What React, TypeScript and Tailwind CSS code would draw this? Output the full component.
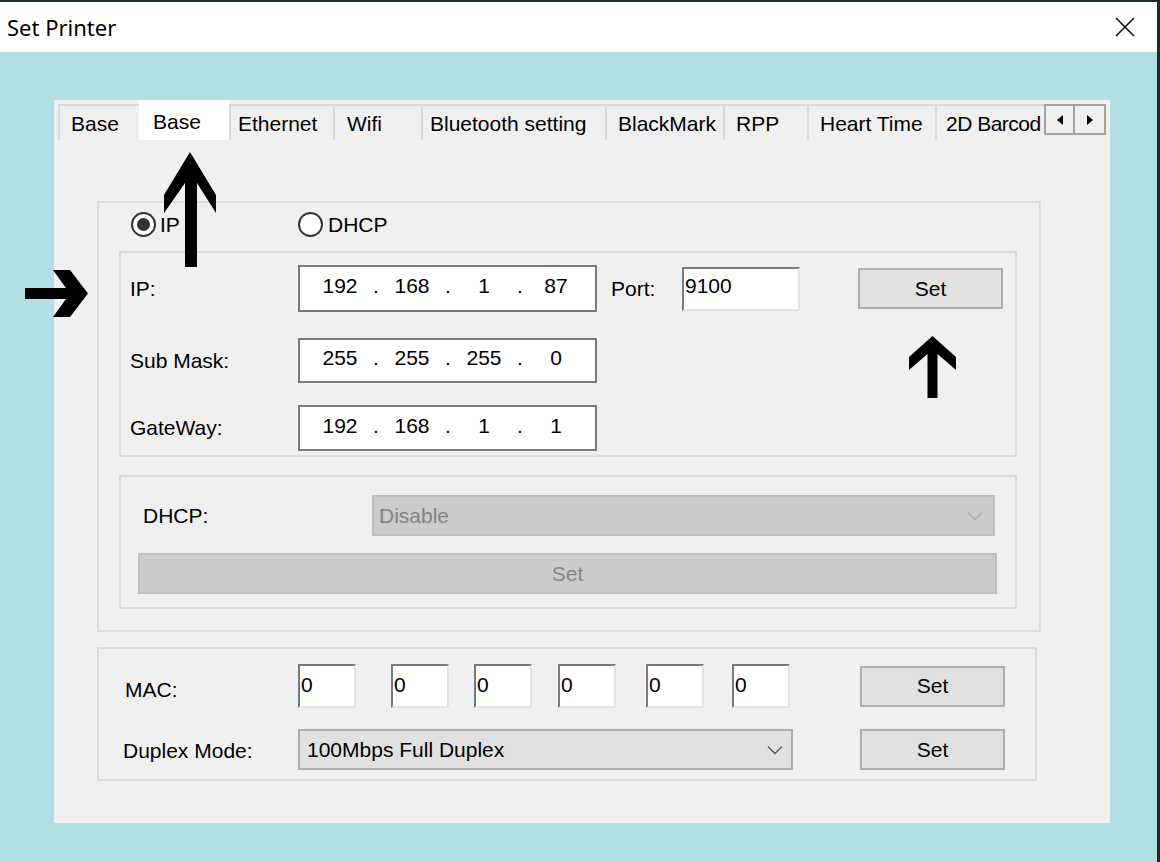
import React from 'react'

// tab captions along the top of the property sheet
const tabs = [
  { label: 'Base', w: 'w-[81px]', pl: 'pl-[11px]' },
  { label: 'Base', w: 'w-[90px]', pl: 'pl-[14px]', active: true },
  { label: 'Ethernet', w: 'w-[104px]', pl: 'pl-[7px]' },
  { label: 'Wifi', w: 'w-[88px]', pl: 'pl-[12px]' },
  { label: 'Bluetooth setting', w: 'w-[184px]', pl: 'pl-[7px]' },
  { label: 'BlackMark', w: 'w-[118px]', pl: 'pl-[11px]' },
  { label: 'RPP', w: 'w-[84px]', pl: 'pl-[11px]' },
  { label: 'Heart Time', w: 'w-[128px]', pl: 'pl-[11px]' },
  { label: '2D Barcod', w: 'w-[109px]', pl: 'pl-[9px] tracking-[-0.5px]' },
]

function IpBox({ parts, h }: { parts: string[]; h: string }) {
  return (
    <div className={`flex w-[299px] ${h} items-center border-2 border-[#7a7a7a] bg-white pb-[5px] pl-[12px]`}>
      {parts.map((p, i) => (
        <React.Fragment key={i}>
          {i > 0 && <span className="w-[16px] text-center">.</span>}
          <span className="w-[56px] text-center">{p}</span>
        </React.Fragment>
      ))}
    </div>
  )
}

// sunken edit box, dark top/left edge and light bottom/right edge
function Edit({ value, className }: { value: string; className: string }) {
  return (
    <div
      className={`border-2 border-t-[#7a7a7a] border-l-[#7a7a7a] border-r-[#e3e3e3] border-b-[#e3e3e3] bg-white pl-[1px] ${className}`}
    >
      {value}
    </div>
  )
}

function Button({ className, disabled }: { className: string; disabled?: boolean }) {
  return (
    <div
      className={`flex h-[41px] items-center justify-center border-2 ${
        disabled ? 'border-[#bfbfbf] bg-[#cccccc] text-[#838383]' : 'border-[#adadad] bg-[#e1e1e1]'
      } ${className}`}
    >
      Set
    </div>
  )
}

function Chevron({ color }: { color: string }) {
  return (
    <svg width="16" height="10" viewBox="0 0 16 10" fill="none">
      <polyline points="1,1.5 8,8.5 15,1.5" stroke={color} strokeWidth="1.4" />
    </svg>
  )
}

function Radio({ checked }: { checked?: boolean }) {
  return (
    <span className="flex h-[25px] w-[25px] items-center justify-center rounded-full border-2 border-[#333] bg-white">
      {checked && <span className="h-[13px] w-[13px] rounded-full bg-[#333]" />}
    </span>
  )
}

export default function App() {
  return (
    <div className="relative h-[862px] w-[1160px] overflow-hidden bg-[#1d2a30] font-['Liberation_Sans',Arial,sans-serif] text-[21px] text-black">
      <div className="mt-[2px] flex h-[860px] w-[1157px] flex-col">
        {/* title bar */}
        <div className="flex h-[50px] items-center justify-between bg-white pl-[7px] pr-[22px]">
          <span className="font-['Noto_Sans',sans-serif] text-[22px] leading-none">Set Printer</span>
          <svg width="20" height="20" viewBox="0 0 20 20">
            <path d="M1 1 L19 19 M19 1 L1 19" stroke="#111" strokeWidth="1.6" />
          </svg>
        </div>

        <div className="flex-1 bg-[#b0dfe4] pl-[54px] pt-[48px]">
          <div className="h-[723px] w-[1056px] bg-[#f0f0f0]">
            {/* tab strip */}
            <div className="flex h-[40px] items-end pl-[4px] text-[21px]">
              {tabs.map((t, i) =>
                t.active ? (
                  <div key={i} className={`flex h-[40px] ${t.w} ${t.pl} items-start bg-white pt-[6px]`}>
                    {t.label}
                  </div>
                ) : (
                  <div
                    key={i}
                    className={`flex h-[36px] ${t.w} ${t.pl} items-center overflow-hidden whitespace-nowrap border-l-2 border-t-2 border-[#d9d9d9] pt-[1px]`}
                  >
                    {t.label}
                  </div>
                ),
              )}
              <div className="mb-[5px] flex">
                <div className="flex h-[31px] w-[31px] items-center justify-center border-2 border-[#a3a3a3]">
                  <svg width="6" height="10" viewBox="0 0 6 10">
                    <polygon points="6,0 0,5 6,10" fill="#000" />
                  </svg>
                </div>
                <div className="-ml-[2px] flex h-[31px] w-[33px] items-center justify-center border-2 border-[#a3a3a3]">
                  <svg width="6" height="10" viewBox="0 0 6 10">
                    <polygon points="0,0 6,5 0,10" fill="#000" />
                  </svg>
                </div>
              </div>
            </div>

            <div className="pl-[43px] pt-[61px]">
              {/* address group */}
              <div className="h-[431px] w-[944px] border-2 border-[#dcdcdc]">
                <div className="mt-[9px] flex h-[25px] items-center pl-[32px]">
                  <Radio checked />
                  <span className="ml-[4px] w-[138px]">IP</span>
                  <Radio />
                  <span className="ml-[5px]">DHCP</span>
                </div>

                <div className="ml-[20px] mt-[14px] h-[206px] w-[898px] border-2 border-[#dcdcdc] pl-[9px] pt-[12px]">
                  <div className="flex items-center">
                    <span className="w-[168px]">IP:</span>
                    <IpBox parts={['192', '168', '1', '87']} h="h-[47px]" />
                    <span className="ml-[14px] w-[71px]">Port:</span>
                    <Edit value="9100" className="h-[44px] w-[118px] leading-[34px]" />
                    <Button className="ml-[58px] w-[145px]" />
                  </div>
                  <div className="mt-[26px] flex items-center">
                    <span className="w-[168px]">Sub Mask:</span>
                    <IpBox parts={['255', '255', '255', '0']} h="h-[45px]" />
                  </div>
                  <div className="mt-[22px] flex items-center">
                    <span className="w-[168px]">GateWay:</span>
                    <IpBox parts={['192', '168', '1', '1']} h="h-[46px]" />
                  </div>
                </div>

                <div className="ml-[20px] mt-[18px] h-[134px] w-[898px] border-2 border-[#dcdcdc] pt-[18px]">
                  <div className="flex items-center pl-[22px]">
                    <span className="w-[229px]">DHCP:</span>
                    <div className="flex h-[41px] w-[623px] items-center justify-between border-2 border-[#bfbfbf] bg-[#cccccc] pl-[5px] pr-[10px] text-[#838383]">
                      <span>Disable</span>
                      <Chevron color="#a8a8a8" />
                    </div>
                  </div>
                  <Button disabled className="ml-[17px] mt-[17px] w-[859px]" />
                </div>
              </div>

              {/* hardware group */}
              <div className="mt-[15px] h-[134px] w-[940px] border-2 border-[#dcdcdc] pt-[15px]">
                <div className="flex items-center pl-[26px]">
                  <span className="mt-[8px] w-[173px]">MAC:</span>
                  <Edit value="0" className="h-[44px] w-[58px] leading-[38px]" />
                  <Edit value="0" className="ml-[35px] h-[44px] w-[58px] leading-[38px]" />
                  <Edit value="0" className="ml-[25px] h-[44px] w-[58px] leading-[38px]" />
                  <Edit value="0" className="ml-[26px] h-[44px] w-[58px] leading-[38px]" />
                  <Edit value="0" className="ml-[30px] h-[44px] w-[58px] leading-[38px]" />
                  <Edit value="0" className="ml-[28px] h-[44px] w-[58px] leading-[38px]" />
                  <Button className="ml-[70px] w-[145px]" />
                </div>
                <div className="mt-[21px] flex items-center pl-[24px]">
                  <span className="mt-[2px] w-[175px]">Duplex Mode:</span>
                  <div className="flex h-[41px] w-[495px] items-center justify-between border-2 border-[#adadad] bg-[#e1e1e1] pl-[7px] pr-[8px]">
                    <span>100Mbps Full Duplex</span>
                    <Chevron color="#555" />
                  </div>
                  <Button className="ml-[67px] w-[145px]" />
                </div>
              </div>
            </div>
          </div>
        </div>
      </div>

      {/* annotation arrows */}
      <svg className="absolute left-[25px] top-[270px]" width="63" height="47" viewBox="0 0 63 47">
        <polygon points="28,0 45,0 63,23.5 45,47 28,47 41,29 0,29 0,18 41,18" fill="#000" />
      </svg>
      <svg className="absolute left-[164px] top-[152px]" width="52" height="115" viewBox="0 0 52 115">
        <polygon points="26,0 52,43 52,61 33,31 33,115 21,115 21,31 0,61 0,43" fill="#000" />
      </svg>
      <svg className="absolute left-[909px] top-[336px]" width="47" height="62" viewBox="0 0 47 62">
        <polygon points="23.5,0 47,21 47,34 28.5,18 28.5,62 18.5,62 18.5,18 0,34 0,21" fill="#000" />
      </svg>
    </div>
  )
}
